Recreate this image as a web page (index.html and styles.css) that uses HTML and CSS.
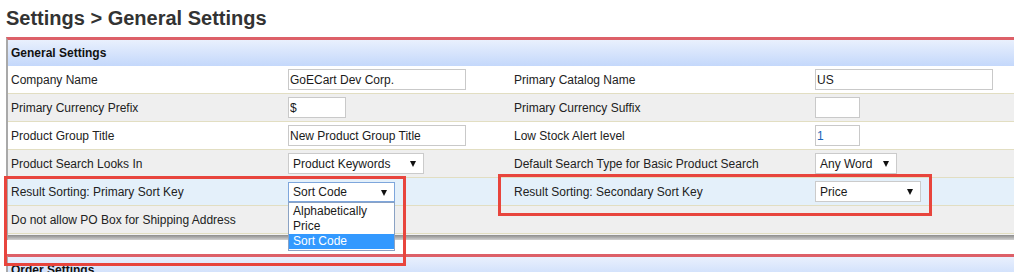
FILE: index.html
```html
<!DOCTYPE html>
<html>
<head>
    <title>Settings - General Settings</title>
    <link rel="stylesheet" href="styles.css">
</head>
<body>
<div class="page">
    <h1 class="page-title">Settings &gt; General Settings</h1>

    <div class="panel">
        <div class="panel-head">General Settings</div>

        <div class="row">
            <div class="cell">Company Name</div>
            <div class="cell"><input class="field w178" type="text" value="GoECart Dev Corp."></div>
            <div class="cell">Primary Catalog Name</div>
            <div class="cell"><input class="field w178" type="text" value="US"></div>
        </div>
        <div class="row alt">
            <div class="cell">Primary Currency Prefix</div>
            <div class="cell"><input class="field w58" type="text" value="$"></div>
            <div class="cell">Primary Currency Suffix</div>
            <div class="cell"><input class="field w45" type="text" value=""></div>
        </div>
        <div class="row">
            <div class="cell">Product Group Title</div>
            <div class="cell"><input class="field w178" type="text" value="New Product Group Title"></div>
            <div class="cell">Low Stock Alert level</div>
            <div class="cell"><input class="field w45 blue" type="text" value="1"></div>
        </div>
        <div class="row alt">
            <div class="cell">Product Search Looks In</div>
            <div class="cell"><div class="select w136">Product Keywords<span class="arrow"></span></div></div>
            <div class="cell">Default Search Type for Basic Product Search</div>
            <div class="cell"><div class="select w82">Any Word<span class="arrow"></span></div></div>
        </div>
        <div class="row hi">
            <div class="cell">Result Sorting: Primary Sort Key</div>
            <div class="cell">
                <div class="select-wrap">
                    <div class="select w107 focus">Sort Code<span class="arrow"></span></div>
                    <ul class="options">
                        <li>Alphabetically</li>
                        <li>Price</li>
                        <li class="picked">Sort Code</li>
                    </ul>
                </div>
            </div>
            <div class="cell">Result Sorting: Secondary Sort Key</div>
            <div class="cell"><div class="select w106">Price<span class="arrow"></span></div></div>
        </div>
        <div class="row alt">
            <div class="cell">Do not allow PO Box for Shipping Address</div>
            <div class="cell"></div>
            <div class="cell"></div>
            <div class="cell"></div>
        </div>
        <div class="panel-foot"></div>
    </div>

    <div class="panel">
        <div class="panel-head">Order Settings</div>
    </div>

    <!-- annotation boxes -->
    <div class="mark mark-left"></div>
    <div class="mark mark-right"></div>
</div>
</body>
</html>
```

FILE: styles.css
```css
html, body { margin: 0; padding: 0; overflow: hidden; background: #fff; }
body { font-family: 'Liberation Sans', Arial, sans-serif; font-size: 12px; color: #222; }
.page { position: relative; padding: 6px 0 0 6px; height: 272px; }

.page-title { margin: 0 0 7px; font-size: 20px; line-height: 24px; font-weight: bold; color: #333; }

.panel { border-top: 3px solid #dd6068; border-left: 2px solid #a9a9a9; margin-right: -20px; background: #fff; }
.panel + .panel { margin-top: 14px; }
.panel-head { height: 26px; line-height: 27px; padding-left: 3px; font-weight: bold; color: #111;
    background: linear-gradient(#e9f0fd, #c4d8fb); }
.panel-foot { height: 5px; border-top: 1px solid #f2f2f2; background: linear-gradient(#8c8c8c, #b5b5b5 60%, #d2d2d2); }

.row { display: grid; grid-template-columns: 277px 226px 301px 1fr; height: 27px; align-items: center;
    border-bottom: 1px solid #e2dec2; background: #fff; }
.row.alt { background: #efefef; }
.row.hi { background: #e4f0fa; }
.cell { padding-left: 3px; white-space: nowrap; }

.field { box-sizing: border-box; height: 21px; margin: 0; padding: 0 1px; border: 1px solid #c9c9c9;
    font-family: 'Liberation Sans', Arial, sans-serif; font-size: 12px; color: #1a1a1a; background: #fff;
    display: block; outline: none; }
.field.blue { color: #1764b8; }
.w178 { width: 178px; }
.w58 { width: 58px; }
.w45 { width: 45px; }
.w136 { width: 136px; }
.w82 { width: 82px; }
.w107 { width: 107px; }
.w106 { width: 106px; }

.select { box-sizing: border-box; position: relative; height: 21px; line-height: 21px; padding-left: 4px;
    border: 1px solid #cbcbcb; background: #fff; color: #1a1a1a; }
.select.focus { height: 20px; line-height: 19px; border-color: #7ea6dc; }
.arrow { position: absolute; right: 7px; top: 7px; width: 0; height: 0;
    border-left: 3px solid transparent; border-right: 3px solid transparent; border-top: 6px solid #111; }

.select-wrap { position: relative; width: 107px; }
.options { position: absolute; left: 0; top: 20px; z-index: 2; box-sizing: border-box; width: 107px;
    margin: 0; padding: 1px 0 1px; list-style: none; background: #fff; border: 1px solid #8aa2c4; }
.options li { height: 15px; line-height: 15px; padding-left: 4px; color: #1a1a1a; }
.options li.picked { background: #3399ff; color: #fff; }

.mark { position: absolute; border: 3px solid #e8453d; z-index: 3; }
.mark-left { left: 4px; top: 176px; width: 396px; height: 84px; }
.mark-right { left: 498px; top: 174px; width: 428px; height: 36px; }
```
